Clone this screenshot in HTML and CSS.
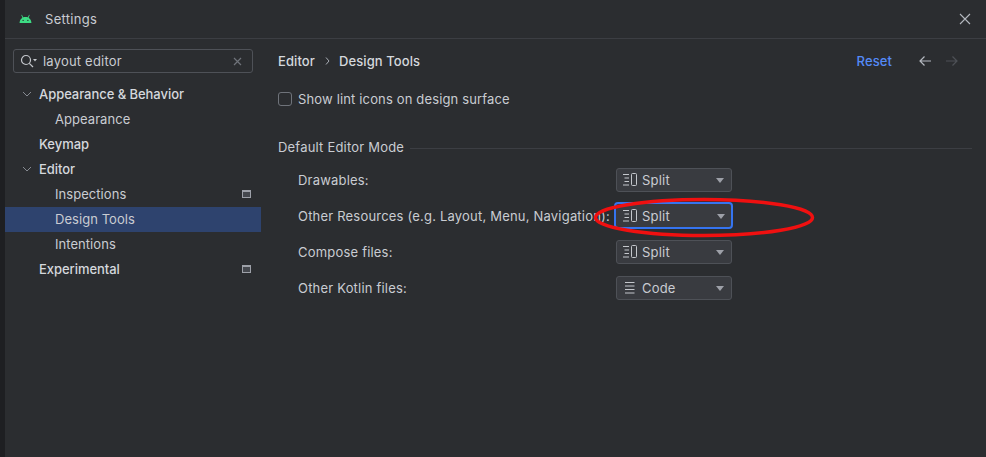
FILE: index.html
```html
<!DOCTYPE html>
<html>
<head>
<meta charset="UTF-8">
<title>Settings</title>
<link rel="stylesheet" href="styles.css">
</head>
<body>
	<div class="strip"></div>
	<div class="dialog">
		<div class="titlebar">
			<svg class="logo" width="13" height="9" viewBox="0 0 13 9.500"><path fill="#3ddc84" d="M0.200 9.500C0.400 6.900 1.500 5 3.200 3.900L2.100 1.100l0.600-0.300L4 3.500C5.600 2.900 7.400 2.900 9 3.500L10.300 0.800l0.600 0.300L9.800 3.900C11.500 5 12.600 6.900 12.800 9.500Z"/><circle cx="4" cy="6.800" r="0.700" fill="#2b2d30"/><circle cx="9" cy="6.800" r="0.700" fill="#2b2d30"/></svg>
			<span class="title">Settings</span>
			<svg class="close" width="12" height="12" viewBox="0 0 12 12"><path d="M1 1L11 11M11 1L1 11" stroke="#b4b8bf" stroke-width="1.100" fill="none"/></svg>
		</div>
		<div class="main">
			<div class="sidebar">
				<div class="search">
					<svg width="18" height="14" viewBox="0 0 18 14"><circle cx="6" cy="6" r="4.500" stroke="#c4c7cc" stroke-width="1.200" fill="none"/><path d="M9.300 9.300L13 13" stroke="#c4c7cc" stroke-width="1.200"/><path d="M13 5h4l-2 2.500z" fill="#c4c7cc"/></svg>
					<span class="search-text">layout editor</span>
					<svg class="clear" width="9" height="9" viewBox="0 0 9 9"><path d="M1 1L8 8M8 1L1 8" stroke="#6f737a" stroke-width="1.200"/></svg>
				</div>
				<ul class="tree">
					<li class="item top"><svg class="chev" width="10" height="6" viewBox="0 0 10 6"><path d="M1 1L5 5L9 1" stroke="#868a91" fill="none"/></svg>Appearance &amp; Behavior</li>
					<li class="item sub">Appearance</li>
					<li class="item top">Keymap</li>
					<li class="item top"><svg class="chev" width="10" height="6" viewBox="0 0 10 6"><path d="M1 1L5 5L9 1" stroke="#868a91" fill="none"/></svg>Editor</li>
					<li class="item sub">Inspections<span class="badge"></span></li>
					<li class="item sub selected">Design Tools</li>
					<li class="item sub">Intentions</li>
					<li class="item top">Experimental<span class="badge"></span></li>
				</ul>
			</div>
			<div class="content">
				<div class="crumbs">
					<span class="crumb">Editor</span>
					<svg class="crumb-sep" width="5" height="8" viewBox="0 0 5 8"><path d="M1 0.500L4 4L1 7.500" stroke="#a8adb5" fill="none"/></svg>
					<span class="crumb">Design Tools</span>
					<span class="reset">Reset</span>
					<svg class="arrow" width="14" height="12" viewBox="0 0 14 12"><path d="M13 6H2M6.500 1.500L2 6L6.500 10.500" stroke="#b4b8bf" stroke-width="1.200" fill="none"/></svg>
					<svg class="arrow" width="14" height="12" viewBox="0 0 14 12"><path d="M1 6H12M7.500 1.500L12 6L7.500 10.500" stroke="#4e5157" stroke-width="1.200" fill="none"/></svg>
				</div>
				<label class="check"><span class="box"></span>Show lint icons on design surface</label>
				<div class="group-title"><span>Default Editor Mode</span><div class="line"></div></div>
				<div class="form">
					<div class="row">
						<span class="label">Drawables:</span>
						<div class="combo">
							<svg class="mode" width="14" height="14" viewBox="0 0 14 14"><path d="M0 1.500h6M1.500 5h4.500M1.500 8.500h4.500M0 12h6" stroke="#c4c7cc" fill="none"/><rect x="8.500" y="0.500" width="5" height="12" rx="1" stroke="#c4c7cc" fill="none"/></svg>
							<span class="combo-text">Split</span><span class="caret"></span>
						</div>
					</div>
					<div class="row">
						<span class="label">Other Resources (e.g. Layout, Menu, Navigation):</span>
						<div class="combo focused">
							<svg class="mode" width="14" height="14" viewBox="0 0 14 14"><path d="M0 1.500h6M1.500 5h4.500M1.500 8.500h4.500M0 12h6" stroke="#c4c7cc" fill="none"/><rect x="8.500" y="0.500" width="5" height="12" rx="1" stroke="#c4c7cc" fill="none"/></svg>
							<span class="combo-text">Split</span><span class="caret"></span>
						</div>
					</div>
					<div class="row">
						<span class="label">Compose files:</span>
						<div class="combo">
							<svg class="mode" width="14" height="14" viewBox="0 0 14 14"><path d="M0 1.500h6M1.500 5h4.500M1.500 8.500h4.500M0 12h6" stroke="#c4c7cc" fill="none"/><rect x="8.500" y="0.500" width="5" height="12" rx="1" stroke="#c4c7cc" fill="none"/></svg>
							<span class="combo-text">Split</span><span class="caret"></span>
						</div>
					</div>
					<div class="row">
						<span class="label">Other Kotlin files:</span>
						<div class="combo">
							<svg class="mode" width="14" height="14" viewBox="0 0 14 14"><path d="M2 1.500h9.500M2 5h9.500M2 8.500h9.500M2 12h9.500" stroke="#c4c7cc" fill="none"/></svg>
							<span class="combo-text">Code</span><span class="caret"></span>
						</div>
					</div>
				</div>
			</div>
		</div>
	</div>
	<!-- hand drawn mark on top of the screenshot -->
	<svg class="mark" width="230" height="50" viewBox="0 0 230 50"><ellipse cx="106" cy="23.500" rx="108.500" ry="18" stroke="#f01010" stroke-width="3.500" fill="none"/></svg>
</body>
</html>
```

FILE: styles.css
```css
*{
	box-sizing: border-box;
}
html,body{
	height: 100%;
}
body{
	margin: 0;
	display: flex;
	background: #2b2d30;
	color: #c9ccd2;
	font-family: Inter, "Liberation Sans", sans-serif;
	font-size: 13px;
	overflow: hidden;
	position: relative;
}
.strip{
	width: 5px;
	background: #1e1f22;
}
.dialog{
	flex: 1;
	display: flex;
	flex-direction: column;
}

/* title */
.titlebar{
	height: 39px;
	display: flex;
	align-items: center;
	padding: 0 15px 1px 14px;
	border-bottom: 1px solid #3c3e43;
}
.logo{
	margin-bottom: 1px;
}
.title{
	margin-left: 13px;
	letter-spacing: 0.3px;
	flex: 1;
}

.main{
	flex: 1;
	display: flex;
}

/* left tree */
.sidebar{
	width: 256px;
	padding-top: 10px;
}
.search{
	margin-left: 8px;
	width: 240px;
	height: 24px;
	border: 1px solid #4e5157;
	border-radius: 3px;
	display: flex;
	align-items: center;
	padding: 0 10px 0 6px;
}
.search-text{
	flex: 1;
	margin-left: 5px;
	letter-spacing: 0.2px;
}
.tree{
	list-style: none;
	margin: 9px 0 0;
	padding: 0;
}
.item{
	height: 25px;
	display: flex;
	align-items: center;
	padding-right: 10px;
	padding-bottom: 1px;
}
.top{
	padding-left: 34px;
	font-weight: 500;
	letter-spacing: -0.05px;
	color: #d5d8dd;
	position: relative;
}
.sub{
	padding-left: 50px;
	letter-spacing: 0.05px;
}
.chev{
	position: absolute;
	left: 17px;
	top: 9px;
}
.selected{
	background: #2e436e;
}
.badge{
	margin-left: auto;
	width: 9px;
	height: 8px;
	border: 1px solid #9da0a8;
	border-top-width: 2px;
	background: #45484e;
}

/* right side */
.content{
	flex: 1;
	padding: 0 14px 0 17px;
}
.crumbs{
	display: flex;
	align-items: center;
	height: 44px;
	padding-right: 13px;
}
.crumb{
	font-weight: 500;
	letter-spacing: 0.1px;
	color: #d5d8dd;
}
.crumb-sep{
	margin: 0 9px 0 10px;
}
.reset{
	margin-left: auto;
	margin-right: 26px;
	color: #548af7;
	font-weight: 500;
	letter-spacing: 0.1px;
}
.arrow{
	margin-right: 13px;
}
.arrow:last-child{
	margin-right: 0;
}
.check{
	display: flex;
	align-items: center;
	height: 18px;
	margin-top: 7px;
	letter-spacing: 0.15px;
}
.box{
	width: 14px;
	height: 14px;
	border: 1px solid #6f737a;
	border-radius: 3px;
	margin-right: 6px;
}
.group-title{
	display: flex;
	align-items: center;
	margin-top: 30px;
	height: 18px;
	letter-spacing: 0.2px;
}
.line{
	flex: 1;
	height: 1px;
	background: #3c3e43;
	margin-left: 6px;
	margin-top: 2px;
}
.form{
	margin-top: 12px;
	padding-left: 20px;
}
.row{
	display: flex;
	align-items: center;
	height: 24px;
	margin-bottom: 12px;
}
.label{
	width: 318px;
	letter-spacing: 0.2px;
	white-space: nowrap;
}
.combo{
	width: 116px;
	height: 24px;
	background: #393b40;
	border: 1px solid #4e5157;
	border-radius: 3px;
	display: flex;
	align-items: center;
	padding: 0 6px;
}
.focused{
	border: 2px solid #3574f0;
	border-radius: 4px;
	width: 119px;
	height: 27px;
	align-self: flex-start;
	margin: -2px 0 0 -2px;
	padding: 1px 5px 0 7px;
}
.combo-text{
	flex: 1;
	margin-left: 5px;
	letter-spacing: 0.2px;
}
.caret{
	width: 0;
	height: 0;
	border-left: 4.500px solid transparent;
	border-right: 4.500px solid transparent;
	border-top: 5px solid #9da0a8;
	margin-right: 1px;
}

/* red oval */
.mark{
	position: absolute;
	left: 598px;
	top: 194px;
	overflow: visible;
}
```
